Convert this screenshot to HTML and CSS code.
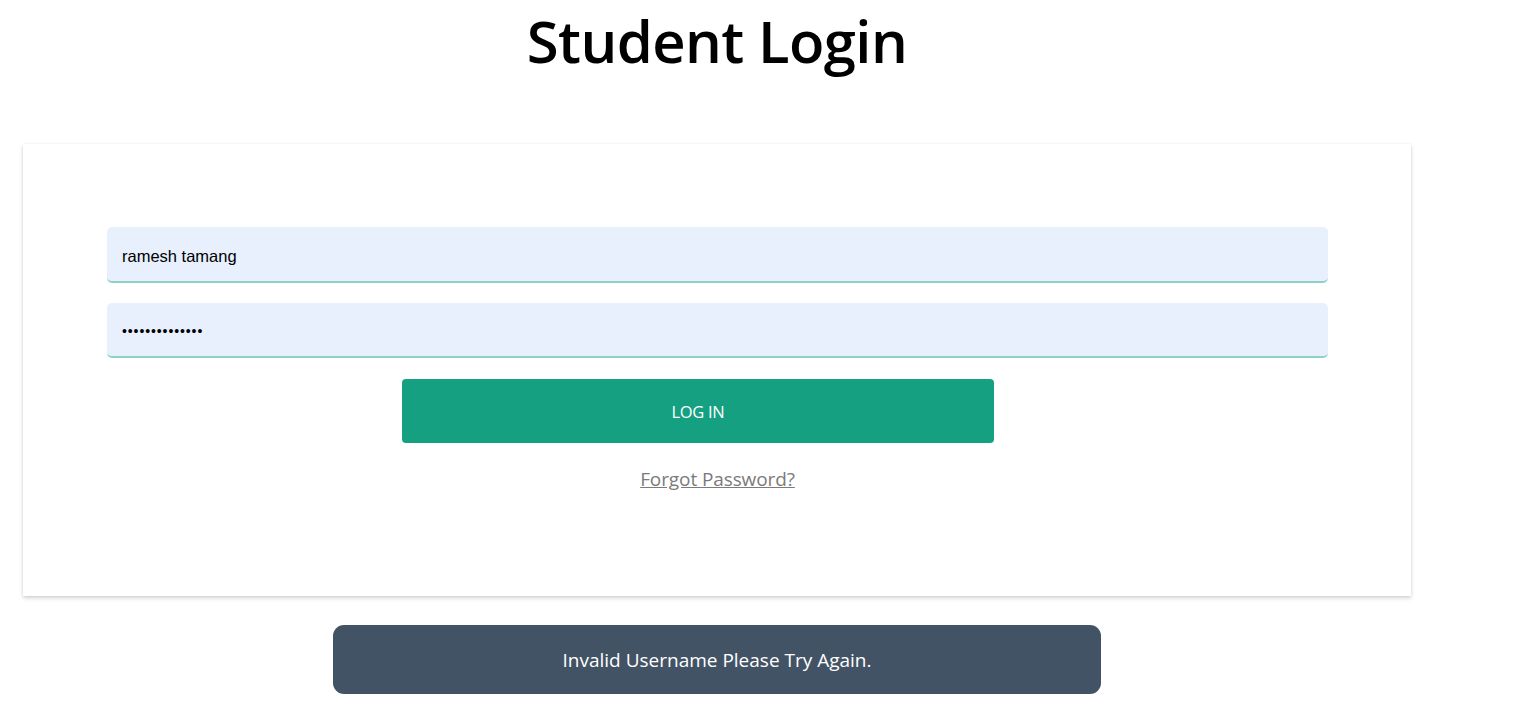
FILE: index.html
```html
<!DOCTYPE html>
<html>
<head>
<meta charset="utf-8">
<link rel="stylesheet" href="styles.css">
</head>
<body>
<div class="page">
  <h1 class="title">Student Login</h1>
  <div class="card">
    <form class="form">
      <input class="field" type="text" value="ramesh tamang">
      <input class="field" type="password" value="ramesh12345678">
      <button class="btn" type="button">LOG IN</button>
      <a class="forgot" href="#">Forgot Password?</a>
    </form>
  </div>
  <div class="toast">Invalid Username Please Try Again.</div>
</div>
</body>
</html>
```

FILE: styles.css
```css
html, body {
  margin: 0;
  padding: 0;
  background: #fff;
}
body {
  font-family: "Open Sans", "Noto Sans", sans-serif;
  color: #000;
}
.page {
  width: 1388px;
  margin-left: 23px;
  display: flex;
  flex-direction: column;
  align-items: center;
}
.title {
  margin: 0;
  height: 144px;
  padding-top: 1px;
  box-sizing: border-box;
  font-size: 58px;
  font-weight: 600;
  line-height: 80px;
  letter-spacing: -0.6px;
  text-align: center;
  align-self: stretch;
}
.card {
  align-self: stretch;
  height: 452px;
  box-sizing: border-box;
  background: #fff;
  box-shadow: 0 2px 4px rgba(0,0,0,0.18), 0 0 2px rgba(0,0,0,0.05);
  padding: 83px 83px 0 84px;
}
.form {
  display: flex;
  flex-direction: column;
  align-items: flex-start;
}
.field {
  width: 1221px;
  height: 56px;
  box-sizing: border-box;
  border: none;
  border-bottom: 2px solid #8dd3c4;
  border-radius: 5px;
  background: #e8f0fe;
  padding: 5px 15px 0;
  font-family: "Liberation Sans", Arial, sans-serif;
  font-size: 16.5px;
  color: #000;
  margin: 0 0 20px;
  outline: none;
}
.field[type=password] {
  height: 55px;
  padding-top: 3px;
  font-size: 14px;
  letter-spacing: 0.9px;
  margin-bottom: 21px;
}
.btn {
  margin-left: 295px;
  width: 592px;
  height: 64px;
  border: none;
  border-radius: 4px;
  background: #16a082;
  color: #fff;
  font-family: "Open Sans", "Noto Sans", sans-serif;
  font-size: 16.5px;
  letter-spacing: -0.3px;
  cursor: pointer;
}
.forgot {
  align-self: center;
  margin-top: 23px;
  font-size: 19px;
  letter-spacing: -0.1px;
  color: #7b7b7b;
  text-decoration: underline;
}
.toast {
  margin-top: 29px;
  width: 768px;
  height: 69px;
  border-radius: 11px;
  background: #435366;
  color: #fff;
  font-size: 19px;
  letter-spacing: 0;
  display: flex;
  align-items: center;
  justify-content: center;
}
```
